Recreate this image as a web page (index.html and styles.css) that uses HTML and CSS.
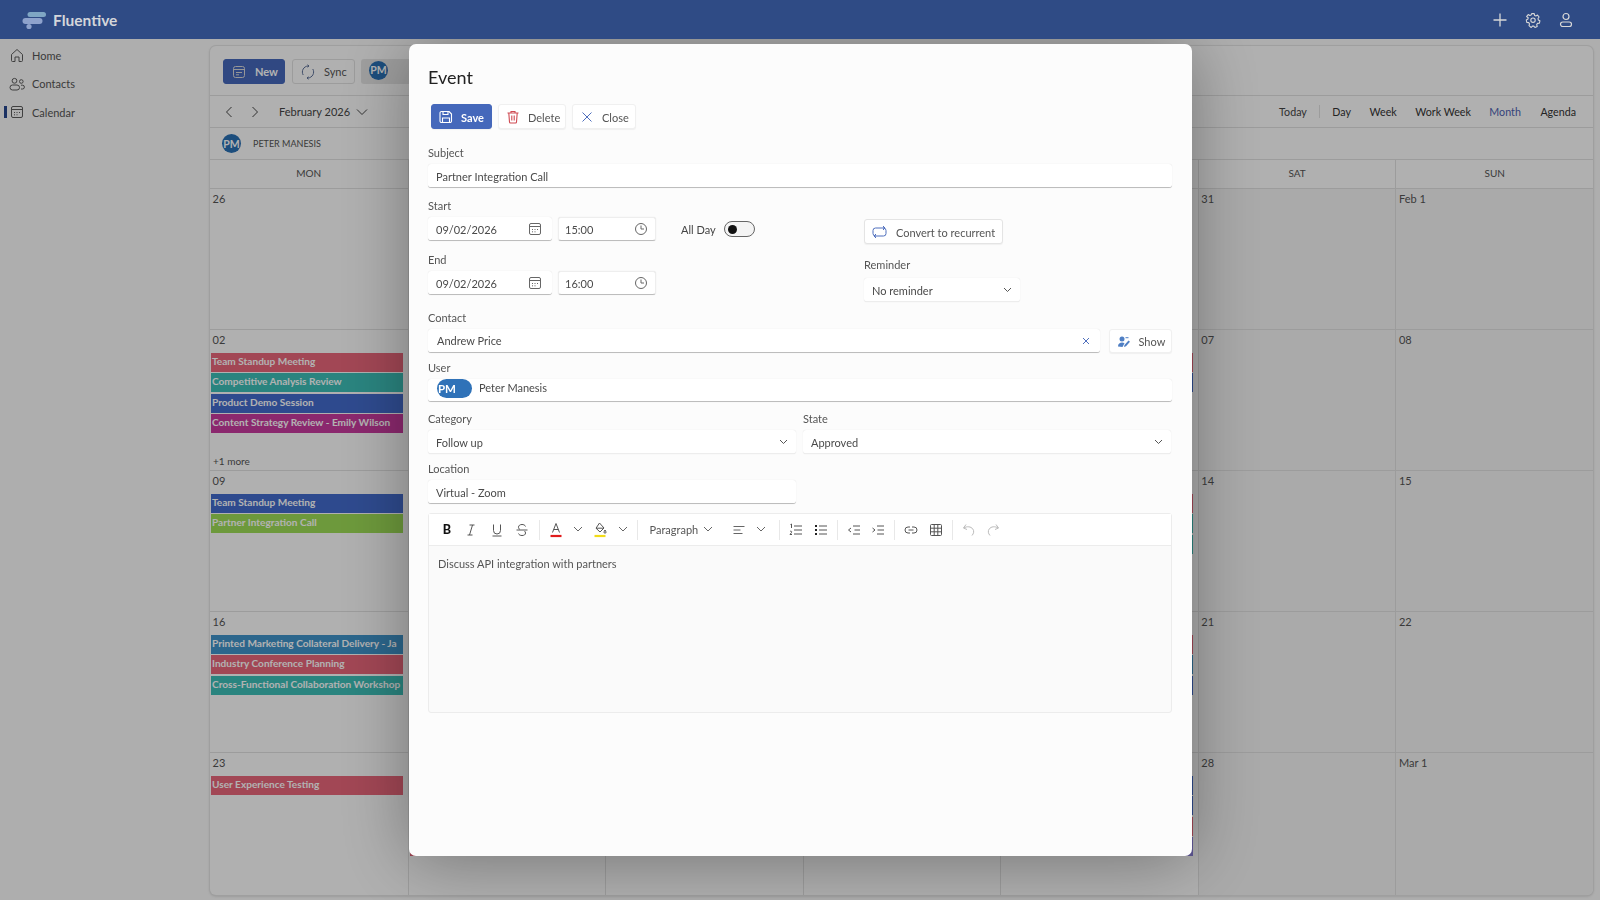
FILE: index.html
```html
<!DOCTYPE html>
<html lang="en">
<head>
    <meta charset="UTF-8">
    <title>Fluentive - Calendar</title>
    <link rel="stylesheet" href="styles.css">
</head>
<body>
    <header class="topbar">
        <div class="brand">
            <svg width="26" height="20" viewBox="0 0 26 20">
                <rect x="5.500" y="2" width="18.500" height="5" rx="2.500" fill="#7fa6c4"/>
                <rect x="0.500" y="8" width="20" height="6" rx="3" fill="#8ea2cc"/>
                <circle cx="7" cy="16.500" r="2.600" fill="#8ea2cc"/>
            </svg>
            <span class="brand-name">Fluentive</span>
        </div>
        <div class="top-actions">
            <svg width="16" height="16" viewBox="0 0 16 16" fill="none" stroke="#d8d8d8" stroke-width="1.300"><path d="M8 1.500v13M1.500 8h13"/></svg>
            <svg width="16" height="16" viewBox="0 0 16 16" fill="none" stroke="#d8d8d8" stroke-width="1.100" stroke-linejoin="round"><path d="M6.800 1.600h2.400l.4 1.800 1.300.6 1.600-.9 1.600 1.900-1.100 1.500.3 1.400 1.600.9-.5 2.400-1.900.2-.8 1.200.5 1.800-2.200 1.100-1.200-1.400H7.400l-1.200 1.400L4 13.600l.5-1.800-.8-1.200-1.900-.2-.5-2.400 1.600-.9.3-1.400L1.600 4.500l1.600-1.900 1.600.9 1.300-.6z"/><circle cx="8" cy="8.200" r="2.200"/></svg>
            <svg width="16" height="16" viewBox="0 0 16 16" fill="none" stroke="#d8d8d8" stroke-width="1.200"><circle cx="8" cy="4.500" r="3"/><rect x="2.500" y="10" width="11" height="4.500" rx="2.250"/></svg>
        </div>
    </header>

    <div class="layout">
        <nav class="sidenav">
            <a class="nav-item">
                <svg width="16" height="16" viewBox="0 0 16 16" fill="none" stroke="#5c5c5c" stroke-width="1"><path d="M2.500 7.500 8 2.500l5.500 5v6a1 1 0 0 1-1 1H10v-4.500H6v4.500H3.500a1 1 0 0 1-1-1z" stroke-linejoin="round"/></svg>
                Home
            </a>
            <a class="nav-item">
                <svg width="16" height="16" viewBox="0 0 16 16" fill="none" stroke="#5c5c5c" stroke-width="1"><circle cx="5.500" cy="4.800" r="2.400"/><circle cx="12.300" cy="5.500" r="1.800"/><rect x="1" y="9" width="9.500" height="5" rx="2.500"/><path d="M12 9.200h1.500a1.800 1.800 0 0 1 0 3.800H12"/></svg>
                Contacts
            </a>
            <a class="nav-item active">
                <svg width="16" height="16" viewBox="0 0 16 16" fill="none" stroke="#5c5c5c" stroke-width="1"><rect x="2.500" y="2.500" width="11" height="11" rx="1.500"/><path d="M2.500 5.500h11M5 8.500h1M7.500 8.500h1M10 8.500h1M5 10.800h1M7.500 10.800h1"/></svg>
                Calendar
            </a>
        </nav>

        <main class="calendar">
            <div class="cal-toolbar">
                <button class="cal-btn primary">
                    <svg width="16" height="16" viewBox="0 0 16 16" fill="none" stroke="#d8d8d8" stroke-width="1"><rect x="2.500" y="2.500" width="11" height="11" rx="2"/><path d="M2.500 5.500h11M5 8.500h6M5 10.800h3"/></svg>
                    New
                </button>
                <button class="cal-btn">
                    <svg width="16" height="16" viewBox="0 0 16 16" fill="none" stroke="#5c6f96" stroke-width="1"><path d="M3.200 11A6 6 0 0 1 8 2h1M12.800 5A6 6 0 0 1 8 14H7"/><path d="M7.500 .8 9 2 7.500 3.200M8.500 12.800 7 14l1.500 1.200"/></svg>
                    Sync
                </button>
                <div class="owner-chip"><span class="avatar">PM</span></div>
            </div>

            <div class="cal-nav">
                <div class="cal-nav-left">
                    <svg width="12" height="14" viewBox="0 0 12 14" fill="none" stroke="#444" stroke-width="1"><path d="M8.500 2 3.500 7l5 5"/></svg>
                    <svg width="12" height="14" viewBox="0 0 12 14" fill="none" stroke="#444" stroke-width="1"><path d="m3.500 2 5 5-5 5"/></svg>
                    <span class="cal-month">February 2026</span>
                    <svg width="12" height="8" viewBox="0 0 12 8" fill="none" stroke="#444" stroke-width="1"><path d="m1 1.500 5 5 5-5"/></svg>
                </div>
                <div class="views">
                    <span class="view today">Today</span>
                    <span class="view">Day</span>
                    <span class="view">Week</span>
                    <span class="view">Work Week</span>
                    <span class="view current">Month</span>
                    <span class="view">Agenda</span>
                </div>
            </div>

            <div class="cal-owner">
                <span class="avatar">PM</span>
                <span class="owner-name">PETER MANESIS</span>
            </div>

            <div class="cal-head">
                <div>MON</div><div></div><div></div><div></div><div></div><div>SAT</div><div>SUN</div>
            </div>

            <div class="cal-grid">
                <div class="cell"><span class="day">26</span></div>
                <div class="cell"></div>
                <div class="cell"></div>
                <div class="cell"></div>
                <div class="cell"></div>
                <div class="cell weekend"><span class="day">31</span></div>
                <div class="cell weekend"><span class="day">Feb 1</span></div>

                <div class="cell">
                    <span class="day">02</span>
                    <div class="event red">Team Standup Meeting</div>
                    <div class="event teal">Competitive Analysis Review</div>
                    <div class="event blue">Product Demo Session</div>
                    <div class="event magenta">Content Strategy Review - Emily Wilson</div>
                    <div class="more">+1 more</div>
                </div>
                <div class="cell"></div>
                <div class="cell"></div>
                <div class="cell"></div>
                <div class="cell">
                    <span class="day"></span>
                    <div class="event red"></div>
                    <div class="event blue"></div>
                </div>
                <div class="cell weekend"><span class="day">07</span></div>
                <div class="cell weekend"><span class="day">08</span></div>

                <div class="cell">
                    <span class="day">09</span>
                    <div class="event blue">Team Standup Meeting</div>
                    <div class="event green">Partner Integration Call</div>
                </div>
                <div class="cell"></div>
                <div class="cell"></div>
                <div class="cell"></div>
                <div class="cell">
                    <span class="day"></span>
                    <div class="event red"></div>
                    <div class="event teal"></div>
                    <div class="event teal"></div>
                </div>
                <div class="cell weekend"><span class="day">14</span></div>
                <div class="cell weekend"><span class="day">15</span></div>

                <div class="cell">
                    <span class="day">16</span>
                    <div class="event ocean">Printed Marketing Collateral Delivery - Ja</div>
                    <div class="event red">Industry Conference Planning</div>
                    <div class="event teal">Cross-Functional Collaboration Workshop</div>
                </div>
                <div class="cell"></div>
                <div class="cell"></div>
                <div class="cell"></div>
                <div class="cell">
                    <span class="day"></span>
                    <div class="event red"></div>
                    <div class="event ocean"></div>
                    <div class="event blue"></div>
                </div>
                <div class="cell weekend"><span class="day">21</span></div>
                <div class="cell weekend"><span class="day">22</span></div>

                <div class="cell">
                    <span class="day">23</span>
                    <div class="event red">User Experience Testing</div>
                </div>
                <div class="cell">
                    <span class="day"></span>
                    <div class="event blue"></div>
                    <div class="event blue"></div>
                    <div class="event teal"></div>
                    <div class="event red"></div>
                </div>
                <div class="cell">
                    <span class="day"></span>
                    <div class="event blue"></div>
                    <div class="event blue"></div>
                    <div class="event teal"></div>
                    <div class="event blue"></div>
                </div>
                <div class="cell">
                    <span class="day"></span>
                    <div class="event blue"></div>
                    <div class="event blue"></div>
                    <div class="event teal"></div>
                    <div class="event blue"></div>
                </div>
                <div class="cell">
                    <span class="day"></span>
                    <div class="event blue"></div>
                    <div class="event blue"></div>
                    <div class="event red"></div>
                    <div class="event purple"></div>
                </div>
                <div class="cell weekend"><span class="day">28</span></div>
                <div class="cell weekend"><span class="day">Mar 1</span></div>
            </div>
        </main>
    </div>

    <div class="backdrop">
        <section class="modal">
            <h1 class="modal-title">Event</h1>

            <div class="modal-actions">
                <button class="act-btn save">
                    <svg width="14" height="14" viewBox="0 0 14 14" fill="none" stroke="#fff" stroke-width="1.100"><path d="M2.500 1.500h7.500l2.500 2.500v7a1.500 1.500 0 0 1-1.500 1.500H2.500A1.500 1.500 0 0 1 1 11V3a1.500 1.500 0 0 1 1.500-1.500z" stroke-linejoin="round"/><path d="M4 1.500v3h5v-3M3.500 12.500V8h7v4.500"/></svg>
                    Save
                </button>
                <button class="act-btn delete">
                    <svg width="14" height="14" viewBox="0 0 14 14" fill="none" stroke="#cf4a52" stroke-width="1.100"><path d="M1.500 3h11M5 3V1.500h4V3M2.800 3l.7 9a1 1 0 0 0 1 1h5a1 1 0 0 0 1-1l.7-9M5.800 5.500v5M8.200 5.500v5"/></svg>
                    Delete
                </button>
                <button class="act-btn close">
                    <svg width="14" height="14" viewBox="0 0 14 14" fill="none" stroke="#4f6fbd" stroke-width="1"><path d="m2.500 2.500 9 9M11.500 2.500l-9 9"/></svg>
                    Close
                </button>
            </div>

            <label class="label first">Subject</label>
            <div class="input">Partner Integration Call</div>

            <div class="when">
                <div class="when-left">
                    <label class="label">Start</label>
                    <div class="when-row">
                        <div class="input date">09/02/2026
                            <svg width="14" height="14" viewBox="0 0 14 14" fill="none" stroke="#666" stroke-width="1"><rect x="1.500" y="1.500" width="11" height="11" rx="1.500"/><path d="M1.500 4.500h11M4 7.500h1M6.500 7.500h1M9 7.500h1M4 9.800h1M6.500 9.800h1"/></svg>
                        </div>
                        <div class="input time">15:00
                            <svg width="14" height="14" viewBox="0 0 14 14" fill="none" stroke="#666" stroke-width="1"><circle cx="7" cy="7" r="5.500"/><path d="M7 3.500V7h3"/></svg>
                        </div>
                        <span class="allday">All Day</span>
                        <span class="toggle"><span class="knob"></span></span>
                    </div>
                    <label class="label end-label">End</label>
                    <div class="when-row">
                        <div class="input date">09/02/2026
                            <svg width="14" height="14" viewBox="0 0 14 14" fill="none" stroke="#666" stroke-width="1"><rect x="1.500" y="1.500" width="11" height="11" rx="1.500"/><path d="M1.500 4.500h11M4 7.500h1M6.500 7.500h1M9 7.500h1M4 9.800h1M6.500 9.800h1"/></svg>
                        </div>
                        <div class="input time">16:00
                            <svg width="14" height="14" viewBox="0 0 14 14" fill="none" stroke="#666" stroke-width="1"><circle cx="7" cy="7" r="5.500"/><path d="M7 3.500V7h3"/></svg>
                        </div>
                    </div>
                </div>
                <div class="when-right">
                    <button class="act-btn recur">
                        <svg width="15" height="14" viewBox="0 0 15 14" fill="none" stroke="#4f6fbd" stroke-width="1"><path d="M4 11H3.500A2.500 2.500 0 0 1 1 8.500v-3A2.500 2.500 0 0 1 3.500 3H13M11 1l2 2-2 2"/><path d="M11 3h.5A2.500 2.500 0 0 1 14 5.500v3a2.500 2.500 0 0 1-2.500 2.500H2M4 9l-2 2 2 2"/></svg>
                        Convert to recurrent
                    </button>
                    <label class="label reminder-label">Reminder</label>
                    <div class="input select reminder">No reminder
                        <svg class="caret" width="9" height="6" viewBox="0 0 9 6" fill="none" stroke="#555" stroke-width="1"><path d="m1 1 3.500 3.500L8 1"/></svg>
                    </div>
                </div>
            </div>

            <label class="label contact-label">Contact</label>
            <div class="contact-row">
                <div class="input contact">Andrew Price
                    <svg width="10" height="10" viewBox="0 0 10 10" fill="none" stroke="#4f6fbd" stroke-width="1"><path d="m2 2 6 6M8 2 2 8"/></svg>
                </div>
                <button class="act-btn show">
                    <svg width="14" height="14" viewBox="0 0 14 14" fill="#4f7fc4"><circle cx="5" cy="4" r="2.500"/><path d="M1 11.500C1 8.500 3 7.500 5 7.500c1 0 1.800.2 2.500.7l-2 3.800z"/><path d="m7 12 .5-2 4-4.500 1.500 1.300L9 11.300z"/><path d="M8.500 2.200h3v1h-3z"/></svg>
                    Show
                </button>
            </div>

            <label class="label user-label">User</label>
            <div class="input user">
                <span class="user-pill">PM</span>
                <span class="user-name">Peter Manesis</span>
            </div>

            <div class="split">
                <div>
                    <label class="label">Category</label>
                    <div class="input select">Follow up
                        <svg class="caret" width="9" height="6" viewBox="0 0 9 6" fill="none" stroke="#555" stroke-width="1"><path d="m1 1 3.500 3.500L8 1"/></svg>
                    </div>
                </div>
                <div>
                    <label class="label">State</label>
                    <div class="input select">Approved
                        <svg class="caret" width="9" height="6" viewBox="0 0 9 6" fill="none" stroke="#555" stroke-width="1"><path d="m1 1 3.500 3.500L8 1"/></svg>
                    </div>
                </div>
            </div>

            <div class="split location">
                <div>
                    <label class="label">Location</label>
                    <div class="input">Virtual - Zoom</div>
                </div>
            </div>

            <div class="editor">
                <div class="editor-tools">
                    <span class="tool bold">B</span>
                    <svg class="tool" width="14" height="14" viewBox="0 0 14 14" fill="none" stroke="#555" stroke-width="1"><path d="M5.500 2h5M3.500 12h5M8.500 2l-3 10"/></svg>
                    <svg class="tool underline" width="14" height="14" viewBox="0 0 14 14" fill="none" stroke="#555" stroke-width="1"><path d="M3.500 1.500v6a3.500 3.500 0 0 0 7 0v-6M2.500 13h9"/></svg>
                    <svg class="tool wide" width="14" height="14" viewBox="0 0 14 14" fill="none" stroke="#555" stroke-width="1"><path d="M10.500 3.500C10 2 8.500 1.500 7 1.500c-2 0-3.500 1-3.500 2.700 0 1 .5 1.800 1.500 2.300M1.500 7h11M9.500 8c.7.600 1 1.200 1 2 0 1.800-1.500 2.500-3.500 2.500-1.700 0-3-.6-3.500-2"/></svg>
                    <i class="sep wide"></i>
                    <svg class="tool" width="14" height="16" viewBox="0 0 14 16" fill="none" stroke="#555" stroke-width="1"><path d="m3.500 10.500 3.500-9 3.500 9M4.700 7.500h4.600"/><path d="M1.500 14h11" stroke="#e01b1b" stroke-width="2.200"/></svg>
                    <svg class="tool" width="10" height="7" viewBox="0 0 10 7" fill="none" stroke="#666" stroke-width="1"><path d="m1 1 4 4 4-4"/></svg>
                    <svg class="tool" width="14" height="16" viewBox="0 0 14 16" fill="none" stroke="#555" stroke-width="1"><path d="M6.500 1 11 6 7 10 3 6.200z M3 6.200h8M12 8c.5 1 1 1.500 1 2.200a1 1 0 0 1-2 0c0-.7.500-1.200 1-2.200"/><path d="M1.500 14h11" stroke="#f2dc1a" stroke-width="2.200"/></svg>
                    <svg class="tool wide" width="10" height="7" viewBox="0 0 10 7" fill="none" stroke="#666" stroke-width="1"><path d="m1 1 4 4 4-4"/></svg>
                    <i class="sep"></i>
                    <span class="tool para">Paragraph</span>
                    <svg class="tool para-caret" width="10" height="7" viewBox="0 0 10 7" fill="none" stroke="#666" stroke-width="1"><path d="m1 1 4 4 4-4"/></svg>
                    <svg class="tool align" width="14" height="14" viewBox="0 0 14 14" fill="none" stroke="#666" stroke-width="1"><path d="M1.500 3.500h11M1.500 7h7M1.500 10.500h9"/></svg>
                    <svg class="tool align-caret" width="10" height="7" viewBox="0 0 10 7" fill="none" stroke="#666" stroke-width="1"><path d="m1 1 4 4 4-4"/></svg>
                    <i class="sep"></i>
                    <svg class="tool" width="14" height="14" viewBox="0 0 14 14" fill="none" stroke="#555" stroke-width="1"><path d="M5 3h8M5 7h8M5 11h8M1.500 1.500 2.500 1v4M1 8.500c1-.8 2.300 0 1.500 1L1 11.500h2"/></svg>
                    <svg class="tool wide" width="14" height="14" viewBox="0 0 14 14" fill="none" stroke="#555" stroke-width="1"><path d="M5 3h8M5 7h8M5 11h8"/><path d="M1 3h2M1 7h2M1 11h2" stroke="#222" stroke-width="2"/></svg>
                    <i class="sep"></i>
                    <svg class="tool" width="14" height="14" viewBox="0 0 14 14" fill="none" stroke="#555" stroke-width="1"><path d="M6 3h7M7.500 7H13M6 11h7M4 5 1.500 7 4 9"/></svg>
                    <svg class="tool" width="14" height="14" viewBox="0 0 14 14" fill="none" stroke="#555" stroke-width="1"><path d="M6 3h7M6.500 7H13M6 11h7M1.500 5 4 7 1.500 9"/></svg>
                    <i class="sep"></i>
                    <svg class="tool" width="14" height="14" viewBox="0 0 14 14" fill="none" stroke="#555" stroke-width="1"><path d="M6 4H4a3 3 0 0 0 0 6h2M8 4h2a3 3 0 0 1 0 6H8M4.500 7h5"/></svg>
                    <svg class="tool wide" width="14" height="14" viewBox="0 0 14 14" fill="none" stroke="#555" stroke-width="1"><rect x="1.500" y="1.500" width="11" height="11" rx="1"/><path d="M5.200 1.500v11M8.800 1.500v11M1.500 5.200h11M1.500 8.800h11"/></svg>
                    <i class="sep"></i>
                    <svg class="tool" width="14" height="14" viewBox="0 0 14 14" fill="none" stroke="#bbb" stroke-width="1"><path d="M4 1.500 1.500 5 5 6.500M1.800 5c3.200-2 7.200-1.500 9 1 1.500 2 1 4.500-.8 6.500"/></svg>
                    <svg class="tool" width="14" height="14" viewBox="0 0 14 14" fill="none" stroke="#bbb" stroke-width="1"><path d="M10 1.500 12.500 5 9 6.500M12.200 5C9 3 5 3.500 3.200 6c-1.500 2-1 4.500.8 6.500"/></svg>
                </div>
                <div class="editor-body">Discuss API integration with partners</div>
            </div>
        </section>
    </div>
</body>
</html>
```

FILE: styles.css
```css
* {
    box-sizing: border-box;
}
body {
    margin: 0;
    height: 900px;
    overflow: hidden;
    background-color: #f9f9f9;
    font-family: 'Lato', 'Open Sans', sans-serif;
    font-size: 11px;
    color: #444;
}
svg {
    flex: none;
}
button {
    font-family: inherit;
    font-size: inherit;
    cursor: pointer;
    white-space: nowrap;
}

/* top bar sits above the backdrop, so its colours are the dimmed ones */
.topbar {
    position: relative;
    z-index: 3;
    display: flex;
    justify-content: space-between;
    align-items: center;
    height: 39px;
    padding: 0 26px 0 22px;
    background-color: #2f4b85;
}
.brand {
    display: flex;
    align-items: center;
    gap: 5px;
}
.brand-name {
    font-size: 15.500px;
    font-weight: 700;
    color: #d4d6da;
}
.top-actions {
    display: flex;
    gap: 17px;
}

.layout {
    display: flex;
    height: 861px;
    padding: 7px 7px 5px 0;
}
.sidenav {
    width: 210px;
    flex: none;
    margin-top: -5px;
}
.nav-item {
    position: relative;
    display: flex;
    align-items: center;
    gap: 7px;
    height: 28.500px;
    padding-left: 9px;
    color: #555;
}
.nav-item.active::before {
    content: "";
    position: absolute;
    left: 4px;
    top: 8px;
    width: 2.500px;
    height: 12px;
    background-color: #27478f;
}

.calendar {
    flex: 1;
    display: flex;
    flex-direction: column;
    background-color: #fcfcfc;
    border-radius: 6px;
    box-shadow: 0 0 0 1px #e4e4e4, 0 1px 3px rgba(0, 0, 0, 0.2);
    overflow: hidden;
}
.cal-toolbar {
    display: flex;
    align-items: center;
    gap: 7px;
    height: 50px;
    padding: 1px 0 0 13px;
    border-bottom: 1px solid #e0e0e0;
}
.cal-btn {
    display: flex;
    align-items: center;
    gap: 8px;
    width: 63px;
    height: 25px;
    padding: 1px 0 0 7px;
    color: #555;
    background-color: #fcfcfc;
    border: 1px solid #e0e0e0;
    border-radius: 3px;
}
.cal-btn.primary {
    width: 62px;
    color: #fff;
    background-color: #4568bb;
    border-color: #4568bb;
    font-weight: 700;
}
.owner-chip {
    width: 70px;
    height: 25px;
    padding: 2px 8px;
    margin-left: -1px;
    background-color: #e4e4e4;
    border-radius: 3px;
}
.avatar {
    display: flex;
    align-items: center;
    justify-content: center;
    width: 19px;
    height: 19px;
    font-size: 10.500px;
    font-weight: 700;
    color: #fff;
    background-color: #2a70b4;
    border-radius: 50%;
}

.cal-nav {
    display: flex;
    justify-content: space-between;
    align-items: center;
    height: 32px;
    padding: 0 17px 0 13px;
    border-bottom: 1px solid #e0e0e0;
}
.cal-nav-left {
    display: flex;
    align-items: center;
    gap: 14px;
}
.cal-month {
    margin: 0 -8px 0 4px;
}
.views {
    display: flex;
    gap: 18.500px;
    font-size: 10.700px;
}
.view {
    color: #333;
}
.view.today {
    padding-right: 12px;
    margin-right: -6px;
    border-right: 1px solid #e0e0e0;
    color: #444;
}
.view.current {
    margin-right: 1px;
    color: #4c5fb0;
}
.cal-owner {
    display: flex;
    align-items: center;
    gap: 12px;
    height: 32px;
    padding-left: 12px;
    border-bottom: 1px solid #e0e0e0;
}
.owner-name {
    font-size: 9px;
    color: #555;
}
.cal-head {
    display: grid;
    grid-template-columns: repeat(7, 1fr);
    height: 28px;
    flex: none;
    font-size: 10px;
    color: #555;
    text-align: center;
    line-height: 27px;
}
.cal-head div + div {
    border-left: 1px solid #e0e0e0;
}
.cal-grid {
    flex: 1;
    display: grid;
    grid-template-columns: repeat(7, 1fr);
    grid-template-rows: repeat(4, 141px) 1fr;
}
.cell {
    position: relative;
    min-width: 0;
    border-top: 1px solid #e0e0e0;
    border-left: 1px solid #e0e0e0;
    overflow: hidden;
}
.cell:nth-child(7n+1) {
    border-left: 0;
}
.cell.weekend {
    background-color: #f4f4f4;
}
.day {
    display: block;
    height: 23px;
    padding: 1px 0 0 2.500px;
    font-size: 11px;
    line-height: 17px;
    color: #555;
}
.event {
    height: 19px;
    margin: 0 5px 1.300px 1px;
    padding-left: 1px;
    font-size: 10.100px;
    font-weight: 700;
    line-height: 17px;
    color: #fff;
    white-space: nowrap;
    overflow: hidden;
}
.event.red { background-color: #e8667a; }
.event.teal { background-color: #3dbeb7; }
.event.blue { background-color: #436bcc; }
.event.magenta { background-color: #c83a9e; }
.event.green { background-color: #9ddc56; }
.event.ocean { background-color: #3f93c9; }
.event.purple { background-color: #8a7fd8; }
.more {
    position: absolute;
    left: 3px;
    top: 125px;
    font-size: 10px;
    color: #555;
}

/* dims the page under the dialog */
.backdrop {
    position: fixed;
    z-index: 2;
    top: 39px;
    left: 0;
    right: 0;
    bottom: 0;
    display: flex;
    justify-content: center;
    align-items: flex-start;
    padding-top: 5px;
    overflow: hidden;
    background-color: rgba(0, 0, 0, 0.3);
}
.modal {
    width: 783px;
    height: 812px;
    padding: 19px 20px 0 19.500px;
    background-color: #fcfcfc;
    border-radius: 7px;
    box-shadow: 0 4px 70px rgba(0, 0, 0, 0.35);
}
.modal-title {
    height: 28px;
    margin: 0;
    font-size: 18px;
    font-weight: 400;
    line-height: 28px;
    color: #222;
}
.modal-actions {
    display: flex;
    gap: 6px;
    margin-top: 13px;
    padding-left: 3px;
}
.act-btn {
    display: flex;
    align-items: center;
    gap: 8px;
    height: 25px;
    padding: 1px 0 0 7px;
    color: #555;
    background-color: #fff;
    border: 1px solid #f0f0f0;
    border-radius: 3px;
    box-shadow: 0 1px 1px rgba(0, 0, 0, 0.05);
}
.act-btn.save {
    width: 61px;
    color: #fff;
    background-color: #4568bb;
    border-color: #4568bb;
    font-weight: 700;
}
.act-btn.delete {
    width: 68px;
}
.act-btn.close {
    width: 64px;
}
.label {
    display: block;
    height: 16px;
    margin: 10px 0 3px;
    font-size: 11px;
    line-height: 16px;
    color: #555;
}
.label.first {
    margin-top: 16px;
}
.input {
    display: flex;
    justify-content: space-between;
    align-items: center;
    height: 24px;
    padding: 1px 8px 0;
    color: #4a4a4a;
    background-color: #fff;
    border-radius: 3px;
    box-shadow: 0 0 1px rgba(0, 0, 0, 0.15);
    border-bottom: 1px solid #bdbdbd;
}
.when {
    display: flex;
}
.when-left {
    width: 436px;
    flex: none;
}
.when-row {
    display: flex;
    align-items: center;
}
.input.date {
    width: 124px;
    padding-right: 10px;
}
.input.time {
    width: 98px;
    margin-left: 6px;
    padding: 0 7px 0 6px;
    border: 1px solid #eee;
    border-bottom-color: #bdbdbd;
}
.allday {
    margin-left: 25px;
}
.toggle {
    display: flex;
    align-items: center;
    width: 31px;
    height: 16px;
    margin-left: 8px;
    padding-left: 3px;
    background-color: #f4f4f4;
    border: 1px solid #666;
    border-radius: 8px;
}
.knob {
    width: 9px;
    height: 9px;
    background-color: #111;
    border-radius: 50%;
}
.label.end-label {
    margin-top: 11px;
}
.when-right {
    padding-top: 31px;
}
.act-btn.recur {
    width: 139px;
    gap: 9px;
    border-color: #e4e4e4;
}
.label.reminder-label {
    margin: 13px 0 5px;
}
.input.select {
    border-bottom-color: #ededed;
}
.input.reminder {
    width: 156px;
}
.label.contact-label {
    margin-top: 8px;
}
.contact-row {
    display: flex;
    gap: 9px;
}
.input.contact {
    flex: 1;
    padding: 0 9px;
}
.act-btn.show {
    width: 63px;
    height: 24px;
}
.label.user-label {
    margin-top: 7px;
}
.input.user {
    justify-content: flex-start;
    align-items: flex-start;
    height: 23px;
    padding: 0 0 0 9px;
}
.user-pill {
    width: 35px;
    height: 19px;
    padding-left: 1px;
    font-size: 11.500px;
    font-weight: 700;
    line-height: 20px;
    color: #fff;
    background-color: #2f72b8;
    border-radius: 10px;
}
.user-name {
    margin-left: 7px;
    line-height: 18px;
}
.split {
    display: grid;
    grid-template-columns: 368px 368px;
    gap: 7px;
}
.split .label {
    margin-top: 9px;
}
.split.location .label {
    margin-top: 7px;
}
.editor {
    margin-top: 9px;
    height: 200px;
    background-color: #fafafa;
    border: 1px solid #ececec;
    border-radius: 3px;
}
.editor-tools {
    display: flex;
    align-items: center;
    gap: 10px;
    height: 32px;
    padding-left: 11px;
    background-color: #fff;
    border-bottom: 1px solid #ececec;
}
.tool.bold {
    width: 14px;
    font-size: 12.500px;
    font-weight: 900;
    text-align: center;
    color: #111;
}
.tool.para {
    width: 49px;
    margin-left: 3px;
    white-space: nowrap;
    color: #555;
}
.tool.underline {
    margin-left: 1.500px;
}
.tool.wide {
    margin-left: 1px;
}
.para-caret {
    margin-left: -6px;
}
.align {
    margin-left: 9px;
}
.align-caret {
    margin-right: 4px;
}
.sep {
    width: 1px;
    height: 20px;
    margin: 0 -1px;
    background-color: #e8e8e8;
}
.sep.wide {
    margin-left: 0;
}
.editor-body {
    padding: 11px 9px;
    color: #555;
}
```
